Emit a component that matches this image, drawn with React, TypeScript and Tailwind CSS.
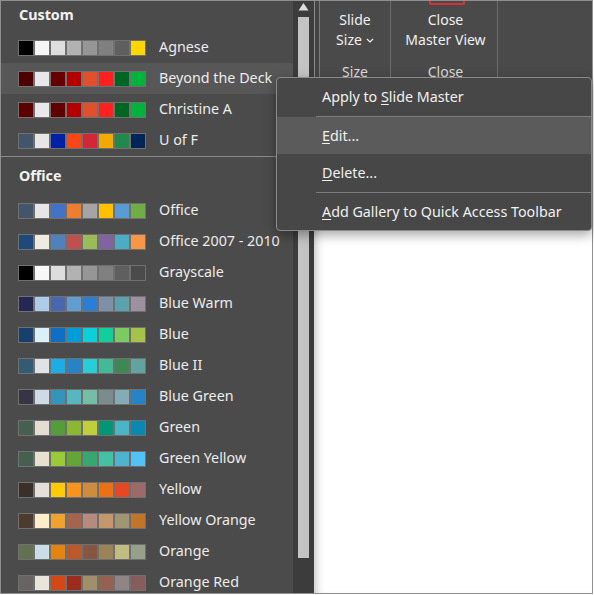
import React from 'react';

type Theme = { name: string; colors: string[]; hover?: boolean };

const custom: Theme[] = [
  { name: 'Agnese', colors: ['#000000', '#f5f5f5', '#dedede', '#b2b2b2', '#969696', '#808080', '#5f5f5f', '#ffd700'] },
  { name: 'Beyond the Deck', colors: ['#4d0000', '#e8e8ea', '#660000', '#b30000', '#e0502d', '#ff2020', '#006622', '#00b33c'], hover: true },
  { name: 'Christine A', colors: ['#5c0000', '#e8e8ea', '#600000', '#b30000', '#e0502d', '#ff2020', '#006622', '#00b33c'] },
  { name: 'U of F', colors: ['#44546a', '#e7e6e6', '#0021a5', '#fa4616', '#d32737', '#f2a900', '#22884c', '#002657'] },
];

const office: Theme[] = [
  { name: 'Office', colors: ['#44546a', '#e7e6e6', '#4472c4', '#ed7d31', '#a5a5a5', '#ffc000', '#5b9bd5', '#70ad47'] },
  { name: 'Office 2007 - 2010', colors: ['#1f497d', '#eeece1', '#4f81bd', '#c0504d', '#9bbb59', '#8064a2', '#4bacc6', '#f79646'] },
  { name: 'Grayscale', colors: ['#000000', '#f8f8f8', '#dddddd', '#b2b2b2', '#969696', '#808080', '#5f5f5f', '#4b4b4b'] },
  { name: 'Blue Warm', colors: ['#242852', '#acccea', '#4a66ac', '#629dd1', '#297fd5', '#7f8fa9', '#5aa2ae', '#9d90a0'] },
  { name: 'Blue', colors: ['#17406d', '#dbeff9', '#0f6fc6', '#009dd9', '#0bd0d9', '#10cf9b', '#7cca62', '#a5c249'] },
  { name: 'Blue II', colors: ['#335b74', '#dfe3e5', '#1cade4', '#2683c6', '#27ced7', '#42ba97', '#3e8853', '#62a39f'] },
  { name: 'Blue Green', colors: ['#373545', '#cedbe6', '#3494ba', '#58b6c0', '#75bda7', '#7a8c8e', '#84acb6', '#2683c6'] },
  { name: 'Green', colors: ['#455f51', '#e3ded1', '#549e39', '#8ab833', '#c0cf3a', '#029676', '#4ab5c4', '#0989b1'] },
  { name: 'Green Yellow', colors: ['#455f51', '#e6e2cf', '#99cb38', '#63a537', '#37a76f', '#44c1a3', '#4eb3cf', '#51c3f9'] },
  { name: 'Yellow', colors: ['#39302a', '#e5dedb', '#ffca08', '#f8931d', '#ce8d3e', '#ec7016', '#e64823', '#9c6a6a'] },
  { name: 'Yellow Orange', colors: ['#4e3b30', '#fbeec9', '#f0a22e', '#a5644e', '#b58b80', '#c3986d', '#a19574', '#c17529'] },
  { name: 'Orange', colors: ['#637052', '#ccddea', '#e48312', '#bd582c', '#865640', '#9b8357', '#c2bc80', '#94a088'] },
  { name: 'Orange Red', colors: ['#696464', '#e9e5dc', '#d34817', '#9b2d1f', '#a28e6a', '#956251', '#918485', '#855d5d'] },
];

function ThemeRow({ theme }: { theme: Theme }) {
  return (
    <div className={`h-[31px] flex items-center pl-[17px] ${theme.hover ? 'bg-[#575757]' : ''}`}>
      <div className="flex">
        {theme.colors.map((c, i) => (
          <div key={i} className="w-4 h-4 border border-[#707070]" style={{ backgroundColor: c }} />
        ))}
      </div>
      <span className="ml-[13px] text-[14.3px] leading-[20px] pb-[1px] text-[#ececec]">{theme.name}</span>
    </div>
  );
}

function MenuItem({ children, active }: { children: React.ReactNode; active?: boolean }) {
  return (
    <div className={`h-[37.5px] flex items-center pl-[45px] text-[14.3px] text-[#f0f0f0] ${active ? 'bg-[#5b5b5b]' : ''}`}>
      {children}
    </div>
  );
}

export default function App() {
  return (
    <div
      className="relative w-[594px] h-[595px] bg-white overflow-hidden"
      style={{ fontFamily: '"Noto Sans", "Open Sans", sans-serif' }}
    >
      <div className="w-[593px] h-[594px] border border-[#8f8f8f] flex overflow-hidden">
        {/* theme gallery */}
        <div className="w-[292px] bg-[#4b4b4b] shrink-0 overflow-hidden">
          <div className="h-[31px] flex items-center pb-[4px] pl-[18px] text-[14.3px] font-bold text-[#f2f2f2]">Custom</div>
          {custom.map((t) => (
            <ThemeRow key={t.name} theme={t} />
          ))}
          <div className="h-px bg-[#8a8a8a]" />
          <div className="h-[38px] flex items-center pl-[18px] text-[14.3px] font-bold text-[#f2f2f2]">Office</div>
          {office.map((t) => (
            <ThemeRow key={t.name} theme={t} />
          ))}
        </div>

        {/* scrollbar */}
        <div className="w-[21px] bg-[#3c3c3c] shrink-0 flex flex-col items-center">
          <svg width="11" height="9" viewBox="0 0 11 9" className="mt-[1px]">
            <path d="M5.5 1 L10.5 8.5 L0.5 8.5 Z" fill="#dcdcdc" />
          </svg>
          <div className="w-[11px] h-[541px] bg-[#c3c3c3] mt-[6px]" />
        </div>

        {/* right side */}
        <div className="flex-1 flex flex-col">
          <div className="h-[90px] bg-[#4a4a4a] flex border-l border-[#8c8c8c]">
            <div className="w-[5px] bg-[#444444] border-r border-[#7a7a7a]" />
            <div className="w-[71px] flex flex-col items-center pt-[9px] text-[14px] text-[#f0f0f0] leading-[20px] border-r border-[#6c6c6c]">
              <span>Slide</span>
              <span className="flex items-center gap-[4px]">
                Size
                <svg width="8" height="5" viewBox="0 0 8 5">
                  <path d="M1 1 L4 4 L7 1" stroke="#f0f0f0" strokeWidth="1.2" fill="none" />
                </svg>
              </span>
              <span className="mt-[12px] text-[#dcdcdc]">Size</span>
            </div>
            <div className="w-[107px] flex flex-col items-center text-[14px] text-[#f0f0f0] leading-[20px] border-r border-[#6c6c6c]">
              <div className="w-[36px] h-[4px] border-b-2 border-x-2 border-[#d13438] rounded-b-[2px] ml-[5px]" />
              <span className="mt-[5px] ml-[3px]">Close</span>
              <span className="ml-[3px]">Master View</span>
              <span className="mt-[12px] ml-[3px] text-[#dcdcdc]">Close</span>
            </div>
          </div>
          <div className="flex-1 bg-white shadow-[inset_8px_0_8px_-6px_rgba(0,0,0,0.25)]" />
        </div>
      </div>

      {/* context menu */}
      <div className="absolute left-[276px] top-[77px] w-[316px] bg-[#474747] border border-[#8a8a8a] rounded-[4px] shadow-[0_4px_12px_rgba(0,0,0,0.35)] overflow-hidden">
        <MenuItem>
          <span>
            Apply to <span className="underline underline-offset-2">S</span>lide Master
          </span>
        </MenuItem>
        <div className="h-px bg-[#7c7c7c] ml-[39px]" />
        <MenuItem active>
          <span>
            <span className="underline underline-offset-2">E</span>dit...
          </span>
        </MenuItem>
        <MenuItem>
          <span>
            <span className="underline underline-offset-2">D</span>elete...
          </span>
        </MenuItem>
        <div className="h-px bg-[#7c7c7c] ml-[39px]" />
        <MenuItem>
          <span>
            <span className="underline underline-offset-2">A</span>dd Gallery to Quick Access Toolbar
          </span>
        </MenuItem>
      </div>
    </div>
  );
}
